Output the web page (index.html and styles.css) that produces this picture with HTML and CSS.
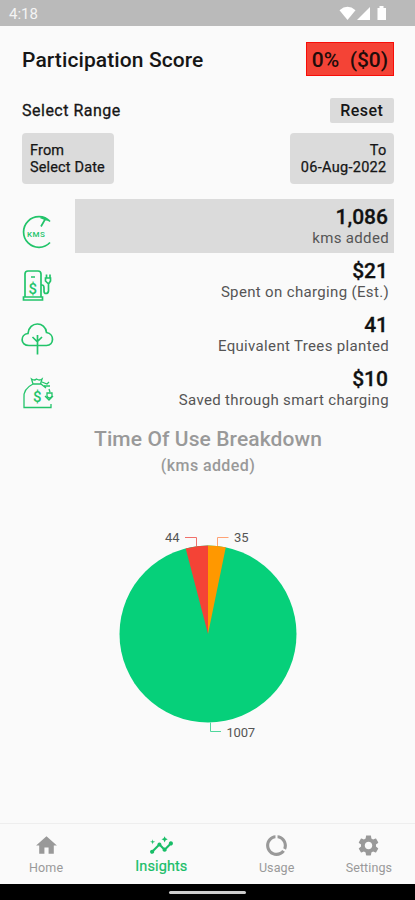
FILE: index.html
```html
<!DOCTYPE html>
<html lang="en">
<head>
<meta charset="utf-8">
<title>Insights</title>
<link rel="stylesheet" href="styles.css">
</head>
<body>
<div class="app">
  <header class="status">
    <span class="clock">4:18</span>
    <svg class="status-icons" width="50" height="16" viewBox="0 0 50 16" fill="#fff">
      <path d="M-0.500 4.200Q7.500 -2.500 15.500 4.200L7.500 14Z"/>
      <path d="M17 14L30 1V14Z"/>
      <path d="M37.500 2h2V0h4v2h2.500v12h-8.500z"/>
    </svg>
  </header>
  <main class="content">
    <div class="score-row">
      <h1 class="title">Participation Score</h1>
      <div class="score">0%&nbsp; ($0)</div>
    </div>
    <div class="range-row">
      <span class="range-label">Select Range</span>
      <button class="reset">Reset</button>
    </div>
    <div class="dates">
      <button class="date from">From<br><span>Select Date</span></button>
      <button class="date to">To<br><span>06-Aug-2022</span></button>
    </div>
    <section class="stats">
      <div class="stat">
        <svg class="icon" viewBox="0 0 36 54"><path d="M30 22.500A15.300 15.300 0 1 0 30 43.500M21 27.500l4-7M20.500 18.500l5 2 4 1"/><text class="kms" x="7" y="38">KMS</text></svg>
        <div class="value-box active"><strong>1,086</strong><span>kms added</span></div>
      </div>
      <div class="stat">
        <svg class="icon" viewBox="0 0 36 54"><path d="M5 44V21q0-3 3-3h10q3 0 3 3v23M3.500 44h19v3h-19zM11 24h4M21 32h1q2 0 2 3v3q0 2.500 2 2.500t2.500-2.500v-7l2-3v-3h-5v3l3 3M26.500 25v-3.500M30 25v-3.500"/><text class="dollar" x="8.500" y="41">$</text></svg>
        <div class="value-box"><strong>$21</strong><span>Spent on charging (Est.)</span></div>
      </div>
      <div class="stat">
        <svg class="icon" viewBox="0 0 36 54"><path d="M9 38.500C0 38.500 0 27.500 8 26.500C9 14 25.500 14 26.500 25.500C35 27 34 38.500 26.500 38.500ZM17.500 47.500V28M17.500 35l-5-5M17.500 34.500l4.500-4.500"/></svg>
        <div class="value-box"><strong>41</strong><span>Equivalent Trees planted</span></div>
      </div>
      <div class="stat">
        <svg class="icon thin" viewBox="0 0 36 54"><path d="M13 23l-1.500-5q3 2 5 0 3 2 5.500 0l-1.500 5zM13 23Q3 28 4 37v9.500H31V43M21 23l5 4M22 21l5 2 2-2M24 25l6 0M29 28l1 3M27 32h5v3q-2.500 4-5 0zM25 35l4 4 4-4"/><text class="dollar" x="13" y="41">$</text></svg>
        <div class="value-box"><strong>$10</strong><span>Saved through smart charging</span></div>
      </div>
    </section>
    <section class="chart">
      <h2 class="chart-title">Time Of Use Breakdown</h2>
      <p class="chart-unit">(kms added)</p>
      <svg class="pie" width="200" height="220" viewBox="108 525 200 220">
        <circle cx="208" cy="634" r="88.500" fill="#06d07a"/>
        <path d="M208 634V545.500A88.500 88.500 0 0 1 225.800 547.300Z" fill="#ff9800"/>
        <path d="M208 634L185.700 548.400A88.500 88.500 0 0 1 208 545.500Z" fill="#f44336"/>
        <path class="lead" d="M185 537.500H196.500V546" stroke="#f0706a"/>
        <path class="lead" d="M228.500 537.500H217.500V546" stroke="#ffa274"/>
        <path class="lead" d="M210.500 722.500V731.500H221" stroke="#50d79c"/>
        <text class="tick" x="165" y="541.500" textLength="14.500">44</text>
        <text class="tick" x="234" y="541.500" textLength="14.500">35</text>
        <text class="tick" x="226.500" y="736.500" textLength="28.500">1007</text>
      </svg>
    </section>
  </main>
  <nav class="tabs">
    <a class="tab"><svg viewBox="0 0 24 24"><path d="M10 20v-6h4v6h5v-8h3L12 3 2 12h3v8z"/></svg><span>Home</span></a>
    <a class="tab selected"><svg viewBox="0 0 24 24"><path d="M21 8c-1.450 0-2.260 1.440-1.930 2.510l-3.550 3.560c-.3-.09-.74-.09-1.040 0l-2.550-2.550C12.270 10.450 11.460 9 10 9c-1.450 0-2.270 1.440-1.930 2.520l-4.560 4.550C2.440 15.740 1 16.550 1 18c0 1.100.9 2 2 2 1.450 0 2.260-1.440 1.930-2.510l4.550-4.560c.3.090.74.090 1.040 0l2.550 2.550C12.730 16.550 13.540 18 15 18c1.450 0 2.270-1.440 1.930-2.520l3.560-3.550C21.560 12.260 23 11.450 23 10c0-1.100-.9-2-2-2z"/><path d="M15 9l.94-2.070L18 6l-2.060-.93L15 3l-.92 2.070L12 6l2.080.93zM3.500 11L4 9l2-.5L4 8l-.5-2L3 8l-2 .5L3 9z"/></svg><span>Insights</span></a>
    <a class="tab"><svg viewBox="0 0 24 24"><path d="M13 2.050v3.030c3.390.49 6 3.390 6 6.920 0 .9-.18 1.750-.48 2.540l2.600 1.530c.56-1.240.88-2.620.88-4.070 0-5.180-3.950-9.450-9-9.950zM12 19c-3.870 0-7-3.130-7-7 0-3.530 2.610-6.430 6-6.920V2.050c-5.060.5-9 4.760-9 9.950 0 5.520 4.470 10 9.990 10 3.310 0 6.240-1.610 8.060-4.090l-2.600-1.530C16.170 17.980 14.210 19 12 19z"/></svg><span>Usage</span></a>
    <a class="tab"><svg viewBox="0 0 24 24"><path d="M19.140 12.940c.04-.3.060-.61.060-.94 0-.32-.02-.64-.07-.94l2.030-1.580c.18-.14.23-.41.120-.61l-1.920-3.320c-.12-.22-.37-.29-.59-.22l-2.390.96c-.5-.38-1.030-.7-1.620-.94l-.36-2.540c-.04-.24-.24-.41-.48-.41h-3.840c-.24 0-.43.17-.47.41l-.36 2.540c-.59.24-1.130.57-1.620.94l-2.390-.96c-.22-.08-.47 0-.59.22L2.740 8.870c-.12.210-.08.470.12.610l2.030 1.580c-.05.3-.09.63-.09.940s.02.640.070.940l-2.030 1.580c-.18.140-.23.410-.12.610l1.920 3.320c.12.220.37.290.59.220l2.390-.96c.5.380 1.030.7 1.620.940l.36 2.540c.05.240.24.410.48.410h3.840c.24 0 .44-.17.470-.41l.36-2.540c.59-.24 1.130-.56 1.620-.94l2.390.960c.22.080.470 0 .590-.22l1.920-3.320c.12-.22.070-.47-.12-.61l-2.010-1.580zM12 15.600c-1.980 0-3.600-1.620-3.600-3.600s1.620-3.600 3.600-3.600 3.600 1.620 3.600 3.600-1.620 3.600-3.600 3.600z"/></svg><span>Settings</span></a>
  </nav>
  <footer class="gesture"><i></i></footer>
</div>
</body>
</html>
```
FILE: styles.css
```css
* { box-sizing: border-box; }
body { margin: 0; font-family: Roboto, sans-serif; color: #161616; background: #fafafa; }
h1, h2, p { margin: 0; font-weight: 500; }
button { border: 0; margin: 0; font: inherit; color: inherit; background: #dbdbdb; }
.app { width: 415px; height: 900px; display: flex; flex-direction: column; overflow: hidden; }

.status { height: 25.500px; background: #bababa; flex: none; display: flex; justify-content: space-between; padding: 5px 25px 0 9px; color: #f4f4f4; }
.clock { font-size: 15px; line-height: 18px; }
.status-icons { margin-top: 1px; overflow: visible; }

.content { flex: 1; padding: 16.500px 21px 0 22px; }
.score-row { display: flex; justify-content: space-between; align-items: center; height: 34px; }
.title { font-size: 21px; line-height: 34px; padding-top: 1px; letter-spacing: .1px; }
.score { width: 88px; height: 34px; border: 1px solid #f80d08; background: #f44336; font-size: 21px; font-weight: 500; line-height: 34px; text-align: center; color: #210c0a; white-space: nowrap; }
.range-row { display: flex; justify-content: space-between; align-items: center; margin-top: 22px; height: 25px; font-size: 16px; font-weight: 500; }
.range-label { letter-spacing: .5px; font-weight: 400; -webkit-text-stroke: .3px; }
.reset { width: 64.500px; height: 25px; border-radius: 2px; line-height: 25px; padding: 0; letter-spacing: .4px; }
.dates { display: flex; justify-content: space-between; margin-top: 9.500px; }
.date { height: 51px; border-radius: 4px; padding: 1px 8px 0; font-size: 14.500px; line-height: 17px; letter-spacing: .15px; -webkit-text-stroke: .25px; }
.from { width: 92px; text-align: left; }
.to { width: 104px; text-align: right; padding-right: 7.500px; letter-spacing: .3px; }

.stats { margin-top: 15.500px; }
.stat { height: 54px; display: flex; }
.icon { width: 36px; height: 54px; margin-left: -2px; margin-right: 18px; flex: none; fill: none; stroke: #22c46a; stroke-width: 1.700; }
.thin { stroke-width: 1.300; }
.kms { font: 500 8px Roboto, sans-serif; fill: #22c46a; stroke: none; letter-spacing: .5px; }
.dollar { font: 500 15px Roboto, sans-serif; fill: #22c46a; stroke: none; }
.value-box { flex: 1; margin-left: .5px; padding: 7px 5px 0 0; text-align: right; font-size: 15px; line-height: 19px; color: #555; letter-spacing: .34px; }
.value-box.active { background: #dbdbdb; }
.value-box strong { display: block; font-size: 21px; line-height: 23px; font-weight: 500; color: #111; letter-spacing: 0; padding-right: 1px; -webkit-text-stroke: .3px; }

.chart { text-align: center; color: #999; display: flex; flex-direction: column; align-items: center; }
.chart-title { font-size: 21px; line-height: 28px; margin-top: 10px; letter-spacing: .1px; }
.chart-unit { font-size: 16px; line-height: 22px; margin-top: 2px; letter-spacing: .4px; }
.pie { margin-top: 48px; }
.lead { fill: none; stroke-width: 1; }
.tick { font-size: 13px; fill: #555; }

.tabs { height: 61px; flex: none; display: grid; grid-template-columns: 92fr 138fr 92fr 92fr; border-top: 1px solid #eee; }
.tab { display: flex; flex-direction: column; align-items: center; padding-top: 9.500px; color: #999; fill: #999; font-size: 12.500px; line-height: 16px; letter-spacing: .1px; }
.tab svg { width: 25px; height: 25px; }
.tab span { margin-top: 1.500px; }
.selected { color: #18bd67; fill: #18bd67; font-size: 14.500px; }
.selected span { margin-top: 1px; -webkit-text-stroke: .2px; }
.gesture { height: 16.500px; flex: none; background: #000; display: flex; justify-content: center; padding-top: 7px; }
.gesture i { width: 77px; height: 3px; border-radius: 2px; background: #ccc; }
```
